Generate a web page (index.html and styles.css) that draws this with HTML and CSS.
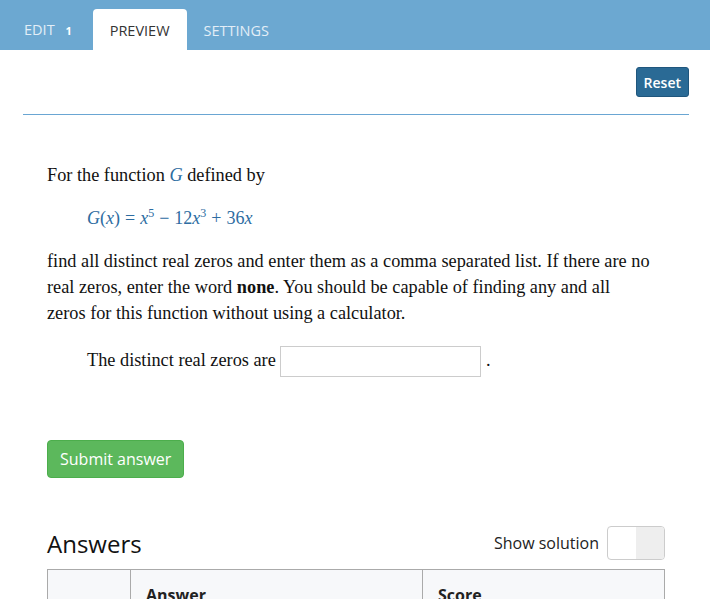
FILE: index.html
```html
<!DOCTYPE html>
<html lang="en">
<head>
  <meta charset="UTF-8" />
  <title>Preview</title>
  <link rel="stylesheet" href="styles.css">
</head>
<body>

  <!-- Tabs -->
  <nav class="abas">
    <a class="aba">Edit <span class="contador">1</span></a>
    <a class="aba ativa">Preview</a>
    <a class="aba">Settings</a>
  </nav>

  <div class="pagina">
    <div class="barra-topo">
      <button class="btn-reset">Reset</button>
    </div>

    <div class="questao">
      <p>For the function <span class="mat"><i>G</i></span> defined by</p>
      <p class="equacao mat"><i>G</i>(<i>x</i>)<span class="op">=</span><i>x</i><sup>5</sup><span class="op">&minus;</span>12<i>x</i><sup>3</sup><span class="op">+</span>36<i>x</i></p>
      <p>find all distinct real zeros and enter them as a comma separated list. If there are no real zeros, enter the word <b>none</b>. You should be capable of finding any and all<br>zeros for this function without using a calculator.</p>
      <p class="resposta">The distinct real zeros are <input type="text" class="campo" /> .</p>
    </div>

    <button class="btn-enviar">Submit answer</button>

    <div class="respostas-topo">
      <h2>Answers</h2>
      <label class="solucao">Show solution <span class="chave"><span></span></span></label>
    </div>

    <table class="tabela">
      <tr>
        <th class="col-num"></th>
        <th class="col-resp">Answer</th>
        <th>Score</th>
      </tr>
    </table>
  </div>

</body>
</html>
```

FILE: styles.css
```css
body {
  margin: 0;
  font-family: "Open Sans", sans-serif;
  color: #222;
  background: #fff;
}

.abas {
  display: flex;
  align-items: flex-end;
  height: 50px;
  padding-left: 7px;
  background-color: #6ca8d1;
}

.aba {
  display: block;
  padding: 13px 17px 10px;
  font-size: 14.5px;
  line-height: 18px;
  text-transform: uppercase;
  color: #e3eef7;
  border-radius: 4px 4px 0 0;
}

.aba.ativa {
  background: #fff;
  color: #333;
}

.contador {
  margin-left: 2px;
  padding: 0 4px 0 5px;
  font-size: 11px;
  font-weight: bold;
  color: #fff;
}

.pagina {
  margin: 0 21px 0 23px;
}

.barra-topo {
  display: flex;
  justify-content: flex-end;
  padding: 17px 0 17px;
  border-bottom: 1px solid #6aa6d3;
}

.btn-reset {
  font-family: "Open Sans", sans-serif;
  font-size: 14px;
  font-weight: 600;
  color: #fff;
  background-color: #2a6a95;
  border: 1px solid #1f567d;
  border-radius: 3px;
  padding: 4px 7px;
  height: 30px;
}

.questao {
  padding: 47px 24px 0;
  font-family: "Liberation Serif", serif;
  font-size: 18.3px;
  line-height: 26px;
  color: #111;
}

.questao p {
  margin: 0 0 17px;
}

.mat {
  color: #2d6ca1;
}

.equacao {
  padding-left: 40px;
  margin-top: 17px !important;
  font-size: 18px;
}

.equacao sup {
  font-size: 12px;
  line-height: 0;
}

.op {
  margin: 0 5px;
}

.resposta {
  padding-left: 40px;
  margin-top: 20px !important;
}

.campo {
  width: 199px;
  height: 29px;
  padding: 0;
  border: 1px solid #ccc;
}

.btn-enviar {
  margin: 46px 0 0 24px;
  font-family: "Open Sans", sans-serif;
  font-size: 16px;
  color: #fff;
  background-color: #5cb85c;
  border: 1px solid #4cae4c;
  border-radius: 4px;
  padding: 0 12px;
  height: 38px;
}

.respostas-topo {
  display: flex;
  justify-content: space-between;
  align-items: center;
  margin: 48px 24px 9px;
}

h2 {
  margin: 0;
  font-size: 24px;
  font-weight: normal;
  color: #111;
}

.solucao {
  display: flex;
  align-items: center;
  gap: 8px;
  font-size: 16px;
  color: #222;
}

.chave {
  display: flex;
  justify-content: flex-end;
  width: 56px;
  height: 32px;
  border: 1px solid #ccc;
  border-radius: 4px;
  background: #fff;
  overflow: hidden;
}

.chave span {
  width: 28px;
  background: #eee;
}

.tabela {
  width: calc(100% - 48px);
  margin: 0 24px;
  border-collapse: collapse;
  background: #f7f8fa;
}

.tabela th {
  text-align: left;
  font-size: 16px;
  font-weight: bold;
  padding: 14px 15px;
  border: 1px solid #aaa;
  border-bottom: none;
}

.col-num {
  width: 52px;
}

.col-resp {
  width: 261px;
}
```
